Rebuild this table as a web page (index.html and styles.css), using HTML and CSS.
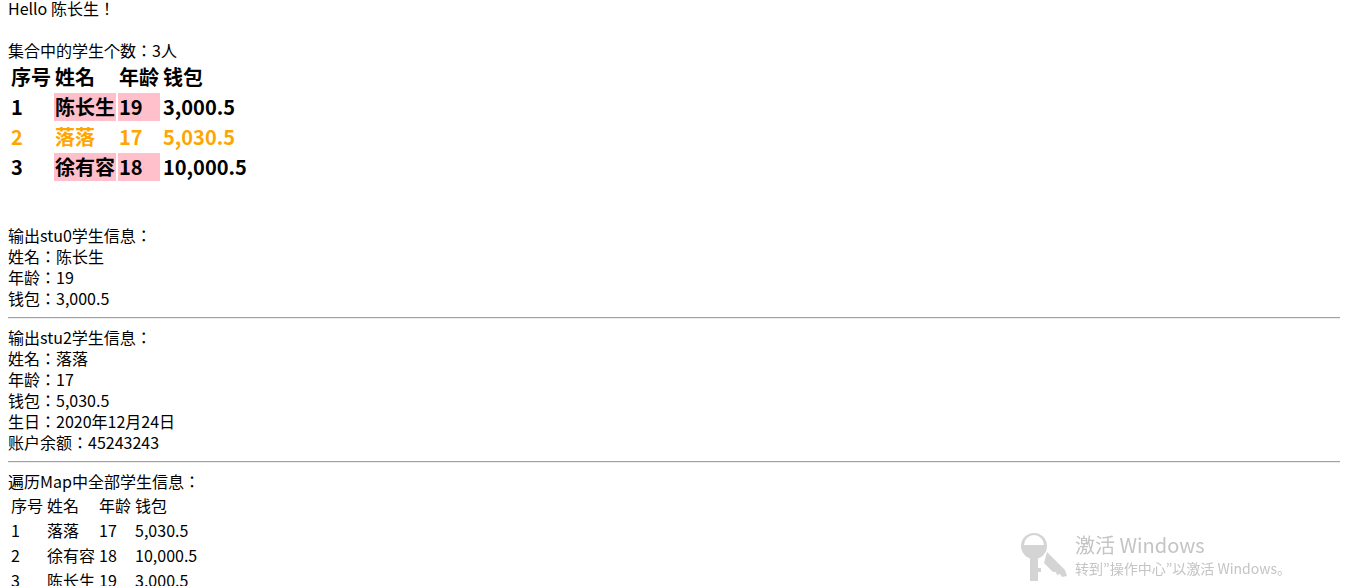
FILE: index.html
```html
<html>
<head>
    <title>学生信息</title>
    <link rel="stylesheet" href="styles.css">
</head>
<body>
    <div class="line">Hello 陈长生！</div>
    <div class="line"></div>
    <div class="line">集合中的学生个数：3人</div>

    <!-- list -->
    <table class="big-table">
        <tr><td>序号</td><td>姓名</td><td>年龄</td><td>钱包</td></tr>
        <tr><td>1</td><td class="pink">陈长生</td><td class="pink">19</td><td>3,000.5</td></tr>
        <tr class="orange"><td>2</td><td>落落</td><td>17</td><td>5,030.5</td></tr>
        <tr><td>3</td><td class="pink">徐有容</td><td class="pink">18</td><td>10,000.5</td></tr>
    </table>
    <div class="line"></div>
    <div class="line"></div>

    <!-- stu0 -->
    <div class="line">输出stu0学生信息：</div>
    <div class="line">姓名：陈长生</div>
    <div class="line">年龄：19</div>
    <div class="line">钱包：3,000.5</div>
    <hr>

    <!-- stu2 -->
    <div class="line">输出stu2学生信息：</div>
    <div class="line">姓名：落落</div>
    <div class="line">年龄：17</div>
    <div class="line">钱包：5,030.5</div>
    <div class="line">生日：2020年12月24日</div>
    <div class="line">账户余额：45243243</div>
    <hr>

    <!-- map -->
    <div class="line">遍历Map中全部学生信息：</div>
    <table class="small-table">
        <tr><td>序号</td><td>姓名</td><td>年龄</td><td>钱包</td></tr>
        <tr><td>1</td><td>落落</td><td>17</td><td>5,030.5</td></tr>
        <tr><td>2</td><td>徐有容</td><td>18</td><td>10,000.5</td></tr>
        <tr><td>3</td><td>陈长生</td><td>19</td><td>3,000.5</td></tr>
    </table>

    <!-- watermark -->
    <div class="activate">
        <svg class="key" width="50" height="52" viewBox="0 0 50 52">
            <g fill="#d4d4d4">
                <path d="M27 20 L45 38 L47 44 L42 45 L40 42 L37 43 L36 40 L33 40 L24 31 Z"/>
                <circle cx="14" cy="14" r="13"/>
                <rect x="10" y="25" width="8" height="24"/>
                <path d="M18 36 L21 36 L21 40 L18 40 Z"/>
            </g>
            <path d="M4 13 A10 10 0 0 1 24 13 Z" fill="#fff"/>
        </svg>
        <div class="activate-text">
            <div class="activate-title">激活 Windows</div>
            <div class="activate-sub">转到”操作中心”以激活 Windows。</div>
        </div>
    </div>
</body>
</html>
```

FILE: styles.css
```css
body {
    font-family: "Noto Sans CJK JP", "Noto Sans CJK SC", sans-serif;
    font-size: 16px;
    color: #000;
    background-color: #fff;
    margin: -2px 8px 0;
    overflow: hidden;
}

.line {
    height: 21px;
    line-height: 21px;
}

table {
    border-spacing: 2px;
}

td {
    padding: 1px;
    text-align: left;
    white-space: nowrap;
}

.big-table {
    font-size: 20px;
    font-weight: bold;
    line-height: 26px;
}

.small-table {
    line-height: 21px;
}

.pink {
    background-color: pink;
}

.orange {
    color: orange;
}

hr {
    margin: 8px 0;
    border: none;
    border-top: 1px solid #a0a0a0;
    border-bottom: 1px solid #eeeeee;
}

.activate {
    position: fixed;
    left: 1020px;
    bottom: 2px;
    display: flex;
    align-items: flex-start;
    gap: 5px;
    color: #c4c4c4;
}

.activate-title {
    font-size: 20px;
    line-height: 26px;
}

.activate-sub {
    font-size: 14px;
    line-height: 20px;
}
```
